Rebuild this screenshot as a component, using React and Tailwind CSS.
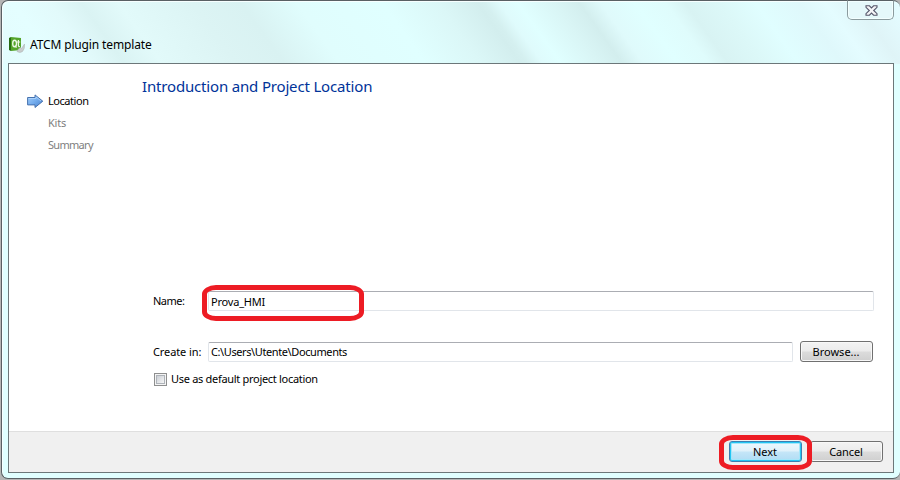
import React from "react";

function QtIcon() {
  return (
    <svg width="17" height="17" viewBox="0 0 17 17" className="shrink-0">
      <path d="M0 1 L2 0 V14 L0 13Z" fill="#276b13" />
      <path d="M2 0 L12 1 V13 L2 14Z" fill="#55a52b" />
      <ellipse cx="5.6" cy="6.5" rx="1.9" ry="3.2" fill="none" stroke="#edf7e7" strokeWidth="1.4" />
      <path d="M6 8.5 L7.5 10.7 M9.4 3 V8.5 Q9.4 9.8 10.9 9.5 M8 5 H11.2" fill="none" stroke="#edf7e7" strokeWidth="1.2" />
      <path d="M15.5 7 Q16 12 13.5 14.5 Q11 16.5 8 14.5 Q9 11.5 11.5 10.5 L12.5 11.5 Z" fill="#c9cdcd" stroke="#a8afaf" strokeWidth=".5" />
    </svg>
  );
}

function ArrowIcon() {
  return (
    <svg width="17" height="15" viewBox="0 0 17 15" className="shrink-0">
      <defs>
        <linearGradient id="arrow" x1="0" y1="0" x2="1" y2="1">
          <stop offset="0" stopColor="#a8d0fa" />
          <stop offset=".5" stopColor="#73aced" />
          <stop offset="1" stopColor="#477fcb" />
        </linearGradient>
      </defs>
      <path d="M.6 3.5 H8 V.9 L15.8 7.2 L8 13.5 V10.9 H.6Z" fill="url(#arrow)" stroke="#4772ae" />
      <path d="M1.6 4.5 H9 V3 L14 7" fill="none" stroke="#b8dbff" strokeWidth=".7" />
    </svg>
  );
}

function CloseButton() {
  return (
    <div className="absolute -top-px right-[6px] flex h-[20px] w-[47px] items-center justify-center rounded-b-[5px] border border-[#8b9b9e] border-t-[#596064] bg-[#e5f8fa] shadow-[inset_0_0_0_1px_#f3ffff]">
      <svg width="13" height="11" viewBox="0 0 13 11" className="ml-[2px]">
        <path d="M1 .8 H4.4 L6.5 3 L8.6 .8 H12 V2.3 L8.7 5.5 L12 8.7 V10.2 H8.6 L6.5 8 L4.4 10.2 H1 V8.7 L4.3 5.5 L1 2.3Z" fill="#f4f4f6" stroke="#55566a" strokeWidth="1.1" />
      </svg>
    </div>
  );
}

function Field({ children, className }) {
  return (
    <div className={"flex h-[20px] items-center rounded-[2px] border border-[#e1e5ea] border-t-[#abadb3] bg-white pl-[2px] " + className}>
      {children}
    </div>
  );
}

function Button({ children, className }) {
  return (
    <button className={"flex h-[21px] w-[73px] items-center justify-center rounded-[3px] border text-black " + className}>
      {children}
    </button>
  );
}

const plain =
  "border-[#707070] bg-[linear-gradient(#f3f3f3_0%,#ebebeb_49%,#dcdcdc_51%,#cfcfcf_100%)] shadow-[inset_0_0_0_1px_#f8f8f8]";

export default function App() {
  return (
    <div className="h-[480px] w-[900px] overflow-hidden bg-[#b5b5b5] pl-px font-['Noto_Sans','Open_Sans',sans-serif] text-[11px] leading-[14px] text-black">
      <div className="relative flex h-[479px] w-[899px] flex-col rounded-[7px] border border-r-0 border-[#596064] bg-[#e0ffff] pl-[5px] shadow-[inset_1px_1px_0_#f7ffff] [background-image:linear-gradient(54.4deg,#e3fcfd_0px,#e4feff_45px,#e2fafb_75px,#daf3f3_100px,#e2fafa_130px,#dcf4f4_190px,#d9f2f2_230px,#e0fdfd_275px,#e0ffff_345px,#dbf7f7_390px,#d3eeee_422px,#d5f0f0_428px,#dffbfc_440px,#e0ffff_455px,#d9f5f5_485px,#d3eeee_505px,#dffafb_522px,#e0ffff_550px,#dffcfc_575px,#d8f3f3_591px,#dcf8f8_620px,#e0feff_648px,#dff8fb_684px,#e4fcff_705px,#dff4f7_730px,#e4fcff_760px)] [background-size:899px_63px] bg-no-repeat">
        <CloseButton />
        <header className="flex h-[62px] shrink-0 items-end pb-[9px] pl-[2px]">
          <QtIcon />
          <h1 className="mb-px ml-[4px] text-[12px] leading-[17px] tracking-[-0.14px] whitespace-nowrap">ATCM plugin template</h1>
        </header>
        <main className="ml-px flex h-[410px] w-[886px] shrink-0 flex-col border border-[#6c7779] bg-white">
          <div className="flex h-[367px]">
            <nav className="flex w-[132px] shrink-0 flex-col pt-[26px] pl-[17px] text-[#808080]">
              <div className="flex h-[22px] items-center pl-px text-black">
                <ArrowIcon />
                <span className="ml-[4px] tracking-[-0.45px]">Location</span>
              </div>
              <div className="flex h-[22px] items-center pl-[22px] tracking-[-0.2px]">Kits</div>
              <div className="flex h-[22px] items-center pl-[22px] tracking-[-0.7px]">Summary</div>
            </nav>
            <section className="flex min-w-0 flex-1 flex-col">
              <h2 className="mt-[12px] ml-px h-[20px] text-[15px] leading-[20px] tracking-[-0.17px] whitespace-nowrap text-[#003399]">Introduction and Project Location</h2>
              <form className="mt-[195px] ml-[12px]">
                <div className="flex items-center">
                  <label className="w-[55px] tracking-[-0.5px]">Name:</label>
                  <Field className="w-[666px]"><span className="pt-[2px] tracking-[-0.2px]">Prova_HMI</span></Field>
                </div>
                <div className="mt-[30px] flex items-center">
                  <label className="w-[55px] tracking-[-0.1px] whitespace-nowrap">Create in:</label>
                  <Field className="w-[585px]"><span className="pt-px tracking-[-0.4px]">C:\Users\Utente\Documents</span></Field>
                  <Button className={"ml-[7px] " + plain}><span className="pr-px">Browse...</span></Button>
                </div>
                <div className="mt-[10px] flex items-center">
                  <span className="ml-px flex h-[13px] w-[13px] items-center justify-center border border-[#8e8f8f] bg-[#f4f4f4]">
                    <span className="h-[9px] w-[9px] border border-[#aeb3b9] bg-[linear-gradient(135deg,#cbcfd5,#f6f6f6)]" />
                  </span>
                  <span className="ml-[4px] tracking-[-0.3px]">Use as default project location</span>
                </div>
              </form>
            </section>
          </div>
          <footer className="flex h-[41px] items-start justify-end gap-[8px] border-t border-[#dfdfdf] bg-[#f0f0f0] pt-[9px] pr-[10px]">
            <Button className="border-[#3c7fb1] bg-[linear-gradient(#eef8fd_0%,#dff1fa_49%,#c5e6f8_51%,#b0dcf4_100%)] shadow-[inset_0_0_0_1px_#22c5f3,inset_0_0_0_2px_#a5e6fa]"><span className="pr-px">Next</span></Button>
            <Button className={plain}><span className="pr-px tracking-[-0.1px]">Cancel</span></Button>
          </footer>
        </main>
        <div className="absolute top-[284px] left-[200px] h-[36px] w-[162px] rounded-[14px/9px] border-[5px] border-[#ed1c24]" />
        <div className="absolute top-[434px] left-[717px] h-[35px] w-[93px] rounded-[14px/9px] border-[5px] border-[#ed1c24]" />
      </div>
    </div>
  );
}
